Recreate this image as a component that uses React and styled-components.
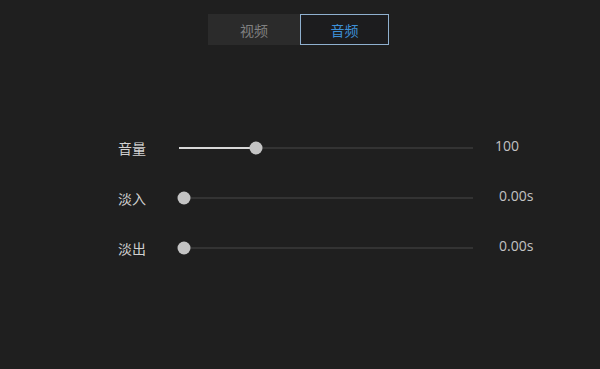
import React from "react";
import styled, { createGlobalStyle } from "styled-components";

const Global = createGlobalStyle`
  html, body {
    margin: 0;
    padding: 0;
    background: #1f1f1f;
    font-family: "Microsoft YaHei", "Noto Sans CJK SC", "Liberation Sans", sans-serif;
  }
`;

const Page = styled("div")`
  width: 600px;
  height: 369px;
  background: #1f1f1f;
  display: flex;
  flex-direction: column;
  align-items: center;
  padding-top: 14px;
  box-sizing: border-box;
`;

const Tabs = styled("div")`
  display: flex;
  margin-left: -3px;
`;

const Tab = styled("div")`
  width: ${(p) => (p.$active ? "89px" : "92px")};
  height: 31px;
  box-sizing: border-box;
  display: flex;
  align-items: center;
  justify-content: center;
  font-size: 14px;
  background: ${(p) => (p.$active ? "#1c1c1e" : "#2b2b2b")};
  color: ${(p) => (p.$active ? "#3d8fd6" : "#808080")};
  border: 1px solid ${(p) => (p.$active ? "#8fb0cf" : "#2b2b2b")};
`;

const Settings = styled("div")`
  width: 100%;
  display: flex;
  flex-direction: column;
  gap: 37px;
  margin-top: 96px;
  padding-left: 118px;
  box-sizing: border-box;
`;

const Row = styled("div")`
  display: flex;
  align-items: center;
  height: 13px;
`;

const Label = styled("div")`
  width: 61px;
  font-size: 14px;
  color: #d0d0d0;
`;

const Track = styled("div")`
  position: relative;
  width: 294px;
  height: 2px;
  background: #333333;
`;

const Fill = styled("div")`
  height: 100%;
  background: #d8d8d8;
`;

const Thumb = styled("div")`
  position: absolute;
  top: 50%;
  width: 13px;
  height: 13px;
  border-radius: 50%;
  background: #c4c4c4;
  transform: translate(-50%, -50%);
`;

const Value = styled("div")`
  margin-left: ${(p) => p.$offset}px;
  margin-top: -4px;
  font-family: "Segoe UI", "Open Sans", "Liberation Sans", sans-serif;
  font-size: 14px;
  color: #c2c2c2;
`;

const rows = [
  { label: "音量", pos: 77, value: "100", offset: 22, fill: true },
  { label: "淡入", pos: 5, value: "0.00s", offset: 26 },
  { label: "淡出", pos: 5, value: "0.00s", offset: 26 },
];

export default function App() {
  return (
    <Page>
      <Global />
      <Tabs>
        <Tab>视频</Tab>
        <Tab $active>音频</Tab>
      </Tabs>
      <Settings>
        {rows.map((r) => (
          <Row key={r.label}>
            <Label>{r.label}</Label>
            <Track>
              {r.fill && <Fill style={{ width: r.pos + "px" }} />}
              <Thumb style={{ left: r.pos + "px" }} />
            </Track>
            <Value $offset={r.offset}>{r.value}</Value>
          </Row>
        ))}
      </Settings>
    </Page>
  );
}
